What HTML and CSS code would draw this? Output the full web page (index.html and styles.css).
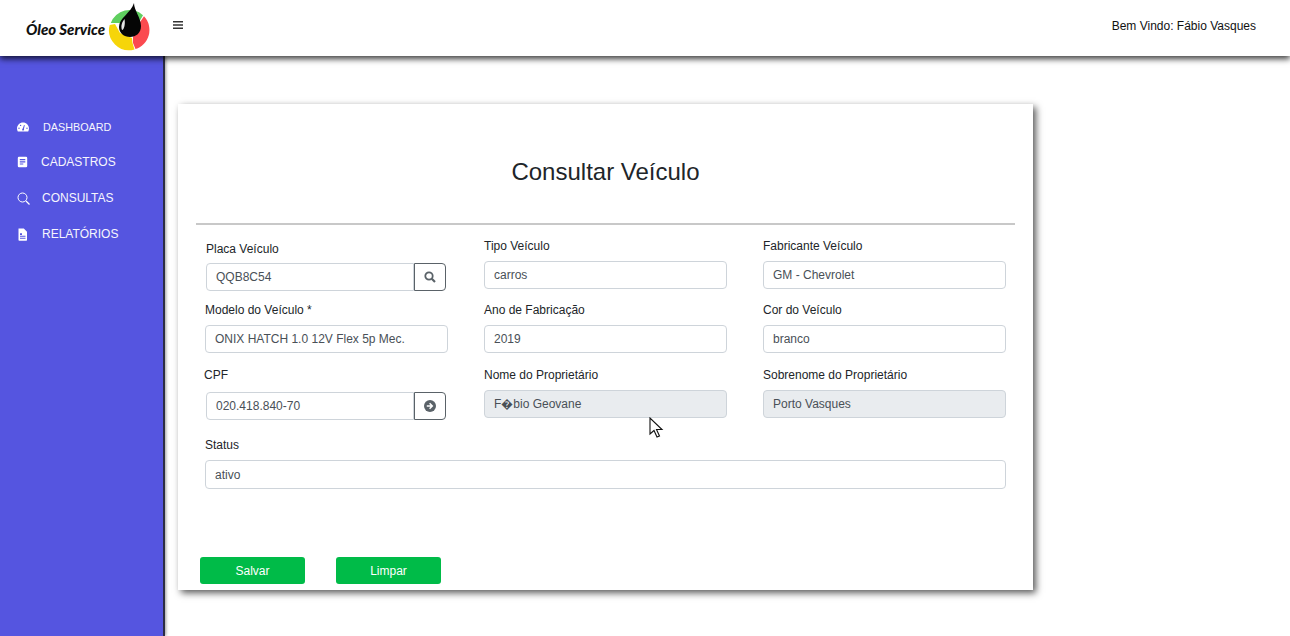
FILE: index.html
```html
<!DOCTYPE html>
<html lang="pt-BR">
<head>
<meta charset="utf-8">
<title>Consultar Veículo</title>
<link rel="stylesheet" href="styles.css">
</head>
<body>
<div class="app">
  <header class="topbar">
    <div class="brand">
      <span class="brand-name">Óleo Service</span>
      <svg class="brand-mark" width="46" height="50" viewBox="0 0 46 50">
        <path d="M4.800 21A20 20 0 0 1 37 13.200L32 22 15 21Z" fill="#5fcf5f"/>
        <path d="M38 14.200A20 20 0 0 1 29.500 47L27 41V35L32 23Z" fill="#fb4a50"/>
        <path d="M3.700 23 9 22l5 9 12 5 .5 5 2 6.400A20 20 0 0 1 3.700 23Z" fill="#f6d50a"/>
        <path d="M28 1C28 8 35 16 35 24 35 31 30 35 24 35 18 35 13 31 13 25 13 16 25 11 28 1Z" fill="#050505"/>
        <path d="M18.500 17C16 20 14.500 24 16 28 18 28 19.500 22 18.500 17Z" fill="#e6e6e6"/>
      </svg>
    </div>
    <svg class="menu-icon" width="10" height="10" viewBox="0 0 10 10">
      <path d="M0 1h10v1.600H0zM0 4.200h10v1.600H0zM0 7.400h10V9H0z" fill="#333"/>
    </svg>
    <div class="welcome">Bem Vindo: Fábio Vasques</div>
  </header>
  <div class="body-row">
    <aside class="sidebar">
      <nav class="nav">
        <a class="nav-item nav-small">
          <svg class="nav-icon" width="12" height="10" viewBox="0 0 12 10"><path d="M6 .5C2.700.5 0 3.200 0 6.500c0 1.100.3 2.100.8 3h10.400c.5-.9.8-1.900.8-3C12 3.200 9.300.5 6 .5zM5.200 7.800a1 1 0 0 0 1.700.3 1 1 0 0 0 0-1.200L7.800 3.200l-.8-.2-1.200 3.500a1 1 0 0 0-.6 1.300zM2 5.500a.7.7 0 1 0 0 1.400.7.7 0 0 0 0-1.400zM3.600 2.700a.7.7 0 1 0 0 1.400.7.7 0 0 0 0-1.400zM10 5.500a.7.7 0 1 0 0 1.400.7.7 0 0 0 0-1.400z" fill="#fff" fill-rule="evenodd"/></svg>
          <span class="nav-label">DASHBOARD</span>
        </a>
        <a class="nav-item">
          <svg class="nav-icon" width="12" height="12" viewBox="0 0 12 12"><path d="M2 .8h7A1.200 1.200 0 0 1 10.200 2v8A1.200 1.200 0 0 1 9 11.200H2A1.200 1.200 0 0 1 .8 10V2A1.200 1.200 0 0 1 2 .8zM2.800 3v1.200h5.500V3zM2.800 5.200v1.200h5.500V5.200zM2.800 7.400v1.200h3.500V7.400z" fill="#fff" fill-rule="evenodd"/></svg>
          <span class="nav-label nav-tight">CADASTROS</span>
        </a>
        <a class="nav-item">
          <svg class="nav-icon" width="13" height="13" viewBox="0 0 13 13"><circle cx="5.500" cy="5.500" r="4.500" fill="none" stroke="#fff" stroke-width="1"/><path d="M9 9l3.500 3.500" stroke="#fff" stroke-width="1.300"/></svg>
          <span class="nav-label nav-tight">CONSULTAS</span>
        </a>
        <a class="nav-item">
          <svg class="nav-icon" width="12" height="13" viewBox="0 0 12 13"><path d="M1.500.5h5.300l3.200 3.200V12a.7.700 0 0 1-.7.700H2.200A.7.700 0 0 1 1.500 12zM3 9.700v1h5.500v-1zM3 7.800v1h5.500v-1zM3 5.300v1.600h2V5.300z" fill="#fff" fill-rule="evenodd"/></svg>
          <span class="nav-label">RELATÓRIOS</span>
        </a>
      </nav>
    </aside>
    <main class="content">
      <section class="card">
        <h1 class="title">Consultar Veículo</h1>
        <hr class="rule">
        <form class="form">
          <div class="field field-first">
            <label class="label label-placa">Placa Veículo</label>
            <div class="group">
              <input class="input group-input" value="QQB8C54" readonly>
              <button class="group-btn" type="button">
                <svg width="12" height="12" viewBox="0 0 12 12"><circle cx="5" cy="5" r="3.700" fill="none" stroke="#5a6268" stroke-width="1.800"/><path d="M7.800 7.800l3.200 3.200" stroke="#5a6268" stroke-width="2.200"/></svg>
              </button>
            </div>
          </div>
          <div class="field"><label class="label">Tipo Veículo</label><input class="input" value="carros" readonly></div>
          <div class="field"><label class="label">Fabricante Veículo</label><input class="input" value="GM - Chevrolet" readonly></div>

          <div class="field"><label class="label">Modelo do Veículo *</label><input class="input" value="ONIX HATCH 1.0 12V Flex 5p Mec." readonly></div>
          <div class="field"><label class="label">Ano de Fabricação</label><input class="input" value="2019" readonly></div>
          <div class="field"><label class="label">Cor do Veículo</label><input class="input" value="branco" readonly></div>

          <div class="field field-first">
            <label class="label label-cpf">CPF</label>
            <div class="group">
              <input class="input group-input" value="020.418.840-70" readonly>
              <button class="group-btn" type="button">
                <svg width="12" height="12" viewBox="0 0 12 12"><circle cx="6" cy="6" r="6" fill="#5a6268"/><path d="M2.800 6h5M5.600 3.300 8.300 6 5.600 8.700" fill="none" stroke="#fff" stroke-width="1.500"/></svg>
              </button>
            </div>
          </div>
          <div class="field"><label class="label">Nome do Proprietário</label><input class="input input-off input-raised" value="F�bio Geovane" readonly></div>
          <div class="field"><label class="label">Sobrenome do Proprietário</label><input class="input input-off" value="Porto Vasques" readonly></div>

          <div class="field field-wide"><label class="label">Status</label><input class="input" value="ativo" readonly></div>
        </form>
        <div class="actions">
          <button class="btn" type="button">Salvar</button>
          <button class="btn" type="button">Limpar</button>
        </div>
      </section>
    </main>
  </div>
  <svg class="cursor" width="16" height="22" viewBox="0 0 16 22">
    <path d="M1 1v16l4-3.500 3 6.500 2.500-1-3-6.500H13z" fill="#fff" stroke="#111" stroke-width="1.100"/>
  </svg>
</div>
</body>
</html>
```
FILE: styles.css
```css
* { box-sizing: border-box; }
html, body { margin: 0; height: 100%; }
body {
  font-family: "Liberation Sans", Arial, sans-serif;
  font-size: 12px;
  color: #212529;
  background: #fff;
  overflow: hidden;
}
.app { position: relative; height: 636px; display: flex; flex-direction: column; }

.topbar {
  position: relative;
  z-index: 2;
  height: 56px;
  flex: none;
  display: flex;
  align-items: flex-start;
  background: #fff;
  box-shadow: 0 3px 6px rgba(0, 0, 0, .75);
}
.brand { width: 173px; height: 56px; display: flex; padding: 1px 0 0 26px; }
.brand-name {
  font-family: Lato, sans-serif;
  font-style: italic;
  font-weight: 900;
  font-size: 15px;
  line-height: 16px;
  color: #111;
  margin-top: 20px;
  width: 79px;
  white-space: nowrap;
}
.brand-mark { margin: 1px 0 0 1px; }
.menu-icon { margin-top: 20px; }
.welcome { margin-left: auto; padding: 19px 34px 0 0; line-height: 14px; color: #111; }

.body-row { flex: 1; display: flex; min-height: 0; }
.sidebar {
  width: 165px;
  flex: none;
  background: #5555e0;
  border-right: 2px solid #2c2c44;
  box-shadow: 1px 0 3px rgba(0, 0, 0, .4);
}
.nav { padding-top: 53px; display: flex; flex-direction: column; }
.nav-item { height: 36px; display: flex; align-items: center; color: #fff; padding-left: 17px; font-size: 12px; }
.nav-small { font-size: 10.800px; height: 35px; padding-top: 1px; }
.nav-icon { flex: none; }
.nav-label { margin-left: 13px; opacity: .95; }
.nav-small .nav-label { margin-left: 14px; }
.nav-tight { margin-left: 12px; }

.content { flex: 1; padding: 48px 0 0 13px; min-width: 0; }
.card {
  width: 855px;
  height: 486px;
  background: #fff;
  box-shadow: 3px 3px 7px rgba(0, 0, 0, .65);
  padding: 54px 18px 0;
  position: relative;
}
.title {
  margin: 0;
  font-size: 24px;
  font-weight: 400;
  line-height: 28px;
  text-align: center;
  color: #212529;
}
.rule { margin: 37px 0 0; border: 0; height: 2px; background: #c8c8c8; }

.form {
  display: grid;
  grid-template-columns: repeat(3, 243px);
  grid-template-rows: 64px 65px 70px auto;
  column-gap: 36px;
  padding: 0 0 0 9px;
  margin-top: 14px;
}
.field { display: flex; flex-direction: column; }
.label { line-height: 14px; height: 22px; color: #212529; }
.input {
  width: 243px;
  height: 28px;
  border: 1px solid #ced4da;
  border-radius: 4px;
  padding: 0 9px;
  font: 12px "Liberation Sans", Arial, sans-serif;
  color: #495057;
  background: #fff;
  outline: none;
}
.input-off { background: #e9ecef; }
.input-raised { padding-bottom: 2px; }
.field-first { padding-left: 1px; }
.label-placa { padding-top: 3px; height: 24px; }
.label-cpf { margin-left: -2px; height: 24px; }
.group { display: flex; width: 240px; height: 28px; }
.group-input { flex: 1; width: auto; border-radius: 4px 0 0 4px; }
.group-btn {
  width: 32px;
  height: 28px;
  padding: 0;
  border: 1px solid #5a6268;
  border-radius: 0 4px 4px 0;
  background: #fff;
  display: flex;
  align-items: center;
  justify-content: center;
}
.field-wide { grid-column: 1 / -1; }
.field-wide .input { width: 801px; height: 29px; }

.actions { display: flex; gap: 31px; padding: 0 0 0 4px; position: absolute; left: 18px; top: 453px; }
.btn {
  width: 105px;
  height: 27px;
  border: 0;
  border-radius: 3px;
  background: #00bb48;
  color: #fff;
  font: 12px "Liberation Sans", Arial, sans-serif;
}
.cursor { position: absolute; left: 649px; top: 417px; z-index: 3; }
```
